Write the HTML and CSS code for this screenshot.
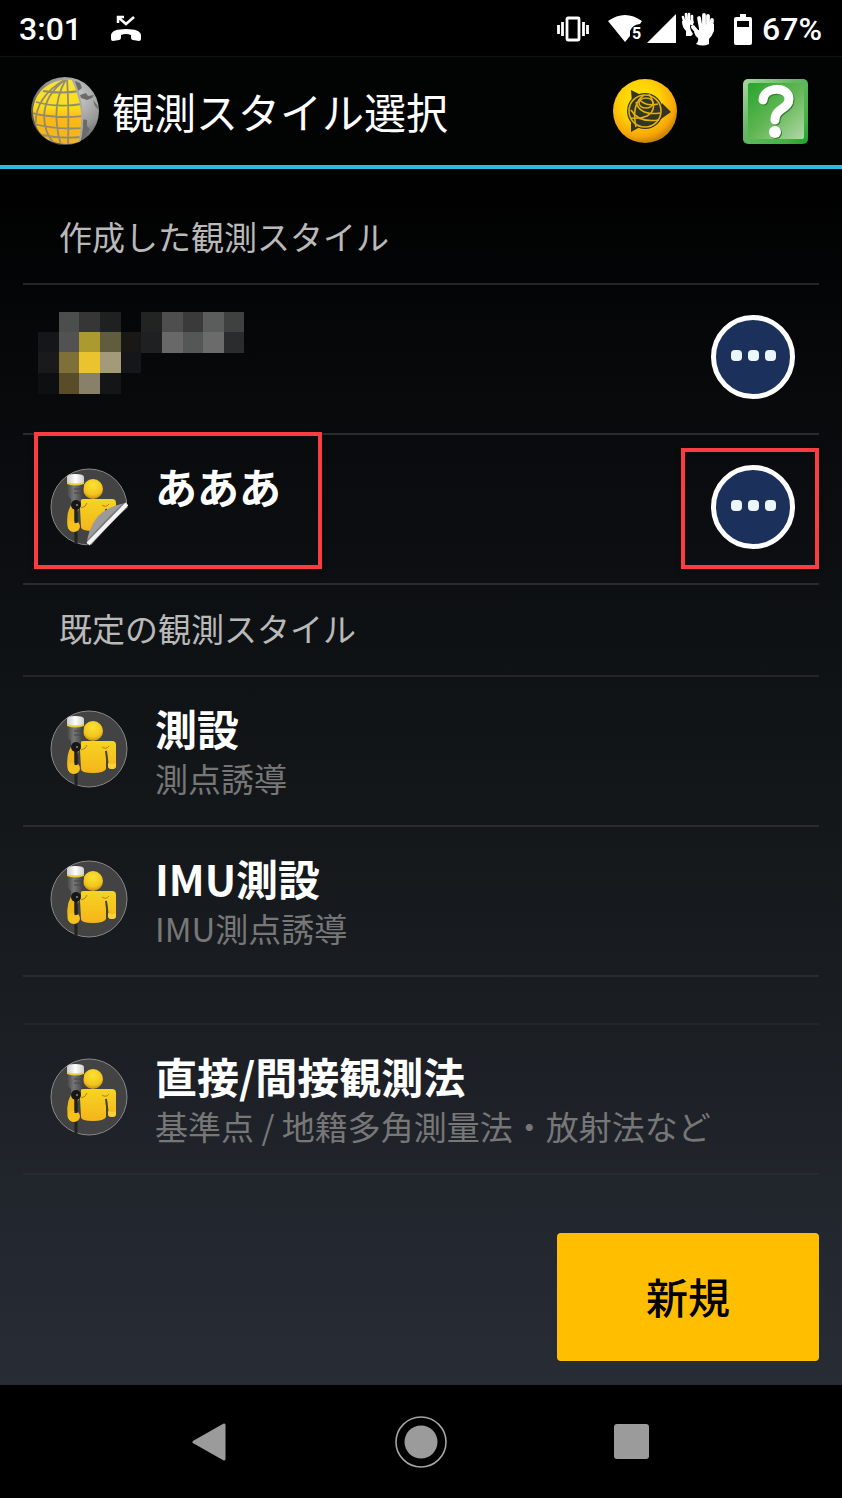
FILE: index.html
```html
<!DOCTYPE html>
<html lang="ja">
<head>
  <meta charset="UTF-8">
  <meta name="viewport" content="width=device-width, initial-scale=1">
  <title>観測スタイル選択</title>
  <link rel="stylesheet" href="styles.css">
</head>
<body>

<!-- Shared icon parts -->
<svg class="defs" aria-hidden="true">
  <defs>
    <radialGradient id="headFill" cx="0.5" cy="0.3" r="0.7">
      <stop offset="0" stop-color="#f8e335"/><stop offset="0.7" stop-color="#f3c41c"/><stop offset="1" stop-color="#c58f10"/>
    </radialGradient>
    <linearGradient id="bodyFill" x1="0" y1="0" x2="0" y2="1">
      <stop offset="0" stop-color="#f5d522"/><stop offset="1" stop-color="#f5b41b"/>
    </linearGradient>
    <linearGradient id="poleFill">
      <stop offset="0" stop-color="#444"/><stop offset="0.4" stop-color="#777"/><stop offset="1" stop-color="#3a3a3a"/>
    </linearGradient>
    <linearGradient id="capFill">
      <stop offset="0" stop-color="#ccc"/><stop offset="0.5" stop-color="#fff"/><stop offset="1" stop-color="#ccc"/>
    </linearGradient>
    <clipPath id="peel"><path d="M0 0H78V35L37 77V78H0Z"/></clipPath>
  </defs>
  <symbol id="surveyor" viewBox="0 0 78 78">
    <circle cx="39" cy="39" r="38" fill="#434343" stroke="#888"/>
    <path d="M28 35C22 41 21 50 22 58" fill="none" stroke="#eeb81b" stroke-width="9" stroke-linecap="round"/>
    <path d="M28 35Q29 31 34 31H62Q66 31 66 35L66 56Q66 59 62 59Q58 59 58 56L57 42L56 40V59Q54 63 43 63Q31 63 31 59L30 40Z" fill="url(#bodyFill)"/>
    <path d="M56 41L58 57" fill="none" stroke="#4a4334" stroke-width="2"/>
    <path d="M52 37Q56 40 59 36M31 40Q36 39 37 35" fill="none" stroke="#b97c0e" stroke-width="1"/>
    <path d="M58 53Q62 55 66 53V56Q66 59 62 59Q58 59 58 56Z" fill="#fbd136"/>
    <circle cx="43" cy="21" r="10" fill="url(#headFill)"/>
    <path d="M26 37V76" stroke="#222" stroke-width="3"/>
    <path d="M18 58Q18 52 24 53Q30 53 30 59Q29 64 23 64Q18 63 18 58Z" fill="#f6c01d"/>
    <path d="M26 40V55" stroke="#222" stroke-width="3"/>
    <path d="M17 15H34L33 28L31 32V36H21V31L18 28Z" fill="url(#poleFill)"/>
    <path d="M24 21h7M24 25h7" stroke="#444" stroke-width="1"/>
    <path d="M17 13Q25 17 34 13V16Q25 19 17 16Z" fill="#e5cc3d"/>
    <path d="M17 9Q17 6 25 6Q34 6 34 9V14Q25 17 17 14Z" fill="url(#capFill)"/>
    <circle cx="26" cy="37" r="5" fill="#171717"/>
    <circle cx="27" cy="37" r="1" fill="#888"/>
  </symbol>
</svg>

<div class="status-bar">
  <span class="clock">3:01</span>
  <svg class="missed" width="32" height="28" viewBox="0 0 32 28" aria-hidden="true">
    <path d="M8 8V2H14M9 3L16 9L24 2" fill="none" stroke="#fff" stroke-width="2.5"/>
    <path d="M1 24V20Q2 14 16 14Q30 14 31 20V24Q31 26 29 26L23 25Q21 25 21 22V20Q16 18 11 20V22Q11 25 9 25L3 26Q1 26 1 24Z" fill="#fff"/>
  </svg>
  <div class="status-icons">
    <svg width="32" height="26" viewBox="0 0 32 26" aria-hidden="true">
      <rect x="10" y="2" width="12" height="22" rx="1" fill="none" stroke="#fff" stroke-width="2.8"/>
      <path d="M1.5 9V18M5.5 6V20M26.5 6V20M30.5 9V18" stroke="#fff" stroke-width="2.8"/>
    </svg>
    <div class="network">
      <svg width="34" height="30" viewBox="0 0 34 30" aria-hidden="true">
        <path d="M0 7Q17 -5 34 7L32 10Q24 11 22 17V22L17 28Z" fill="#fff"/>
        <text class="wifi-band" x="24" y="25">5</text>
      </svg>
      <svg width="29" height="30" viewBox="0 0 29 30" aria-hidden="true"><path d="M29 0V29H0Z" fill="#fff"/></svg>
      <svg width="34" height="36" viewBox="0 0 34 36" aria-hidden="true">
        <g fill="none" stroke="#fff" stroke-linecap="round">
          <path d="M2 6L4 13M5 3L6 13M8 3V13M11 5V13" stroke-width="2.6"/>
          <path d="M18 7L20 18M23 4V18M27 5V18M31 9L30 18" stroke-width="3.8"/>
          <path d="M12 16L17 22" stroke-width="4"/>
        </g>
        <path d="M1 10L12 9L13 12Q9 12 9 16Q9 19 12 23L10 25H5V20Q1 16 1 10Z" fill="#fff"/>
        <path d="M18 14L33 13V20Q31 25 28 28V33Q22 36 15 33Q18 30 17 27Q14 25 13 21L15 20L18 19Z" fill="#fff"/>
      </svg>
    </div>
    <div class="battery">
      <svg width="18" height="31" viewBox="0 0 18 31" aria-hidden="true">
        <path d="M6 0H12V3H16Q18 3 18 5V29Q18 31 16 31H2Q0 31 0 29V5Q0 3 2 3H6Z" fill="#fff"/>
        <path d="M3 7H15V13H3Z" fill="#000"/>
      </svg>
      <span>67%</span>
    </div>
  </div>
</div>

<header class="app-bar">
  <svg class="globe" width="70" height="70" viewBox="0 0 70 70" aria-hidden="true">
    <defs>
      <radialGradient id="globeGrey" cx="0.65" cy="0.3" r="0.7">
        <stop offset="0" stop-color="#ccc"/><stop offset="0.6" stop-color="#999"/><stop offset="1" stop-color="#555"/>
      </radialGradient>
      <linearGradient id="globeGold" x1="0" y1="0" x2="0" y2="1">
        <stop offset="0" stop-color="#f6e43c"/><stop offset="0.45" stop-color="#fbdc19"/><stop offset="0.6" stop-color="#fdb913"/><stop offset="1" stop-color="#efb322"/>
      </linearGradient>
      <clipPath id="globeClip"><circle cx="35" cy="35" r="34"/></clipPath>
      <clipPath id="goldClip"><path d="M42 4Q57 34 49 66Q35 71 18 64Q3 54 3 34Q5 16 20 8Q31 3 42 4Z"/></clipPath>
    </defs>
    <circle cx="35" cy="35" r="34" fill="url(#globeGrey)"/>
    <g clip-path="url(#globeClip)">
      <path d="M45 5L50 7L52 12L48 15L46 11ZM50 19L56 17L58 20L64 19L62 22L57 24L51 22ZM63 24L67 29L69 34L65 30ZM51 43L57 44L57 50L60 53L55 60L49 64Z" fill="#6b6b6b"/>
      <g clip-path="url(#goldClip)">
        <circle cx="35" cy="35" r="34" fill="url(#globeGold)"/>
        <path d="M36 3Q24 24 27 49Q28 60 31 69M36 3Q10 22 15 49Q17 60 24 67M36 3Q2 22 6 54M37 3Q39 30 38 69M13 15Q31 18 50 15M6 26Q27 32 52 28M2 37Q26 43 53 40M4 48Q28 54 53 52M12 59Q30 63 51 61" fill="none" stroke="#938c70" stroke-width="1.8"/>
      </g>
      <path d="M42 2Q58 34 49 68" fill="none" stroke="#aaa" stroke-width="2"/>
    </g>
  </svg>
  <h1>観測スタイル選択</h1>
  <div class="app-actions">
    <button type="button" aria-label="メニュー">
      <svg width="64" height="64" viewBox="0 0 64 64" aria-hidden="true">
        <defs>
          <radialGradient id="ball" cx="0.42" cy="0.35" r="0.65">
            <stop offset="0" stop-color="#ffe900"/><stop offset="0.5" stop-color="#ffd005"/><stop offset="0.85" stop-color="#f7a506"/><stop offset="1" stop-color="#c68406"/>
          </radialGradient>
        </defs>
        <circle cx="32" cy="32" r="32" fill="url(#ball)"/>
        <path d="M18 11L28 16L19 24ZM49 24L58 33L48 40ZM18 41L27 48L18 53Z" fill="#333427"/>
        <circle cx="32" cy="32" r="18" fill="#34352a"/>
        <g fill="none" stroke="#e0b00c" stroke-width="1.6">
          <circle cx="32" cy="32" r="16"/>
          <path d="M18 31Q25 44 46 41M23 23Q27 37 47 34M26 20Q32 28 45 25M36 15Q46 30 34 37Q27 40 18 39M31 16Q18 25 23 48"/>
          <ellipse cx="33" cy="24" rx="7" ry="5"/>
        </g>
      </svg>
    </button>
    <button type="button" aria-label="ヘルプ">
      <svg width="65" height="65" viewBox="0 0 65 65" aria-hidden="true">
        <defs>
          <linearGradient id="helpEdge" x1="0" y1="0" x2="1" y2="1">
            <stop offset="0" stop-color="#a8d7a0"/><stop offset="0.4" stop-color="#66b965"/><stop offset="0.8" stop-color="#43b244"/><stop offset="1" stop-color="#19a52a"/>
          </linearGradient>
          <linearGradient id="helpFace" x1="0" y1="0" x2="1" y2="1">
            <stop offset="0" stop-color="#26a52d"/><stop offset="0.5" stop-color="#61b653"/><stop offset="1" stop-color="#b0d8a6"/>
          </linearGradient>
        </defs>
        <rect width="65" height="65" rx="5" fill="url(#helpEdge)"/>
        <rect x="5" y="4" width="56" height="56" rx="2" fill="url(#helpFace)"/>
        <path d="M21 22C22 8 47 8 47 21C47 31 33 30 33 42" fill="none" stroke="#367b36" stroke-width="9" stroke-linecap="round"/>
        <circle cx="33" cy="54" r="6" fill="#367b36"/>
        <path d="M20 21C21 7 46 7 46 20C46 30 32 29 32 41" fill="none" stroke="#fff" stroke-width="9" stroke-linecap="round"/>
        <circle cx="32" cy="53" r="6" fill="#fff"/>
      </svg>
    </button>
  </div>
</header>

<main>
  <h2>作成した観測スタイル</h2>
  <ul class="style-list">
    <li class="row">
      <!-- Pixelated private entry -->
      <svg class="mosaic" width="206" height="82" viewBox="0 0 206 82" shape-rendering="crispEdges" aria-hidden="true">
        <path d="M0 20h21v20H0z" fill="#151619"/><path d="M0 40h21v21H0z" fill="#1a1a1a"/><path d="M0 61h21v21H0z" fill="#0e0f11"/>
        <path d="M21 0h20v20H21z" fill="#4b4e4d"/><path d="M21 20h20v20H21z" fill="#525252"/><path d="M21 40h20v21H21z" fill="#7d7038"/><path d="M21 61h20v21H21z" fill="#584c29"/>
        <path d="M41 0h21v20H41z" fill="#373637"/><path d="M41 20h21v20H41z" fill="#ab9a30"/><path d="M41 40h21v21H41z" fill="#eac32f"/><path d="M41 61h21v21H41z" fill="#898069"/>
        <path d="M62 0h21v20H62z" fill="#1e2120"/><path d="M62 20h21v20H62z" fill="#605d3e"/><path d="M62 40h21v21H62z" fill="#a39a7a"/><path d="M62 61h21v21H62z" fill="#131516"/>
        <path d="M83 20h20v20H83z" fill="#191817"/><path d="M83 40h20v21H83z" fill="#141619"/>
        <path d="M103 0h21v20h-21z" fill="#222423"/><path d="M103 20h21v21h-21z" fill="#1f2022"/>
        <path d="M124 0h21v20h-21z" fill="#4f4e4f"/><path d="M124 20h21v21h-21z" fill="#686868"/>
        <path d="M145 0h20v20h-20z" fill="#3b3a3b"/><path d="M145 20h20v21h-20z" fill="#545756"/>
        <path d="M165 0h21v20h-21z" fill="#5b5d5c"/><path d="M165 20h21v21h-21z" fill="#6b6b6b"/>
        <path d="M186 0h20v20h-20z" fill="#3e413f"/><path d="M186 20h20v21h-20z" fill="#2b2c2e"/>
      </svg>
      <button type="button" class="more" aria-label="その他"><span></span><span></span><span></span></button>
    </li>
    <li class="row">
      <a href="#" class="style-link">
        <svg class="avatar" viewBox="0 0 78 78" aria-hidden="true">
          <g clip-path="url(#peel)"><use href="#surveyor" width="78" height="78"/></g>
          <path d="M77 35L37 77Q37 62 48 48Q60 37 77 35Z" fill="#9b9b9b"/>
          <path d="M76 37Q62 49 39 75" fill="none" stroke="#777" stroke-width="6"/>
          <path d="M77 36Q64 49 38 76" fill="none" stroke="#f4f4f4" stroke-width="4"/>
        </svg>
        <span class="texts"><span class="name">あああ</span></span>
      </a>
      <button type="button" class="more" aria-label="その他"><span></span><span></span><span></span></button>
      <span class="mark mark-name"></span>
      <span class="mark mark-more"></span>
    </li>
  </ul>

  <h2>既定の観測スタイル</h2>
  <ul class="style-list">
    <li class="row">
      <a href="#" class="style-link">
        <svg class="avatar" aria-hidden="true"><use href="#surveyor"/></svg>
        <span class="texts"><span class="name">測設</span><span class="note">測点誘導</span></span>
      </a>
    </li>
    <li class="row">
      <a href="#" class="style-link">
        <svg class="avatar" aria-hidden="true"><use href="#surveyor"/></svg>
        <span class="texts"><span class="name">IMU測設</span><span class="note">IMU測点誘導</span></span>
      </a>
    </li>
  </ul>
  <ul class="style-list separate">
    <li class="row">
      <a href="#" class="style-link">
        <svg class="avatar" aria-hidden="true"><use href="#surveyor"/></svg>
        <span class="texts"><span class="name">直接/間接観測法</span><span class="note">基準点 / 地籍多角測量法・放射法など</span></span>
      </a>
    </li>
  </ul>

  <button type="button" class="new-button">新規</button>
</main>

<nav class="nav-bar">
  <button type="button" aria-label="戻る">
    <svg width="38" height="40" viewBox="0 0 38 40" aria-hidden="true"><path d="M2 20L32 3V37Z" fill="#9b9b9b" stroke="#9b9b9b" stroke-width="3" stroke-linejoin="round"/></svg>
  </button>
  <button type="button" aria-label="ホーム">
    <svg width="52" height="52" viewBox="0 0 52 52" aria-hidden="true"><circle cx="26" cy="26" r="25" fill="none" stroke="#a5a5a5" stroke-width="1.6"/><circle cx="26" cy="26" r="16.5" fill="#9b9b9b"/></svg>
  </button>
  <button type="button" aria-label="履歴">
    <svg width="35" height="35" viewBox="0 0 35 35" aria-hidden="true"><rect width="35" height="35" rx="3" fill="#9b9b9b"/></svg>
  </button>
</nav>

</body>
</html>
```
FILE: styles.css
```css
* { box-sizing: border-box; }
body { font-family: "Noto Sans CJK JP", sans-serif; background: #000; color: #fff; margin: 0; min-height: 100vh; display: flex; flex-direction: column; }
h1, h2, ul { margin: 0; padding: 0; font-weight: 400; }
ul { list-style: none; }
button { font-family: inherit; border: none; padding: 0; background: none; color: inherit; cursor: pointer; }
a { color: inherit; text-decoration: none; }
svg { display: block; flex: none; }
.defs { position: absolute; width: 0; height: 0; }

/* Status bar */
.status-bar { height: 57px; padding: 2px 20px 0 19px; display: flex; align-items: center; border-bottom: 1px solid #111; font-family: Roboto, sans-serif; font-size: 32px; font-weight: 500; line-height: 40px; }
.missed { margin-left: 28px; }
.status-icons { margin-left: auto; display: flex; align-items: center; gap: 19px; }
.network { display: flex; align-items: center; gap: 5px; }
.battery { display: flex; align-items: center; gap: 10px; }
.wifi-band { font-size: 16px; font-weight: 700; fill: #fff; }

/* App bar */
.app-bar { height: 112px; padding: 0 34px 0 30px; display: flex; align-items: center; background: #020303; border-bottom: 4px solid #33b5e5; }
.app-bar h1 { margin-left: 12px; font-size: 42px; line-height: 60px; }
.app-actions { margin-left: auto; display: flex; align-items: center; gap: 66px; }

/* Style lists */
main { flex: 1; padding: 24px 23px; display: flex; flex-direction: column; background: linear-gradient(#000, #080a0c 20%, #14181b 55%, #282c35); }
h2 { height: 90px; padding-left: 36px; font-size: 33px; line-height: 86px; color: #b9b9b9; }
.style-list { border-top: 2px solid #232527; }
.row { position: relative; height: 150px; padding-bottom: 4px; display: flex; align-items: center; border-bottom: 2px solid #292b2e; }
.separate { margin-top: 46px; }
.style-link { flex: 1; display: flex; align-items: center; gap: 27px; padding-left: 27px; }
.avatar { width: 78px; height: 78px; }
.texts { display: flex; flex-direction: column; height: 102px; }
.name { font-size: 42px; font-weight: 700; line-height: 60px; }
.note { font-size: 33px; line-height: 40px; color: #777; }
.mosaic { align-self: flex-start; margin: 27px 0 0 15px; }
.more { flex: none; width: 84px; height: 84px; margin: 0 24px 0 auto; padding-bottom: 3px; display: flex; align-items: center; justify-content: center; gap: 6px; background: #1b315c; border: 5px solid #fff; border-radius: 50%; }
.more span { width: 11px; height: 11px; border-radius: 4px; background: #ebf6fb; }

/* Red callout frames over the new entry */
.mark { position: absolute; border: 4px solid #fb3c40; box-shadow: 0 2px 4px rgba(0,0,0,0.6); pointer-events: none; }
.mark-name { left: 11px; top: -3px; width: 288px; height: 137px; }
.mark-more { right: 0; top: 13px; width: 138px; height: 121px; }

.new-button { align-self: flex-end; margin-top: auto; width: 262px; height: 128px; padding-bottom: 3px; border-radius: 4px; background: #ffbf00; color: #000; font-size: 42px; font-weight: 500; }

/* System navigation */
.nav-bar { height: 113px; display: grid; grid-template-columns: repeat(3, 25%); justify-content: center; }
.nav-bar button { display: flex; align-items: center; justify-content: center; }
```
